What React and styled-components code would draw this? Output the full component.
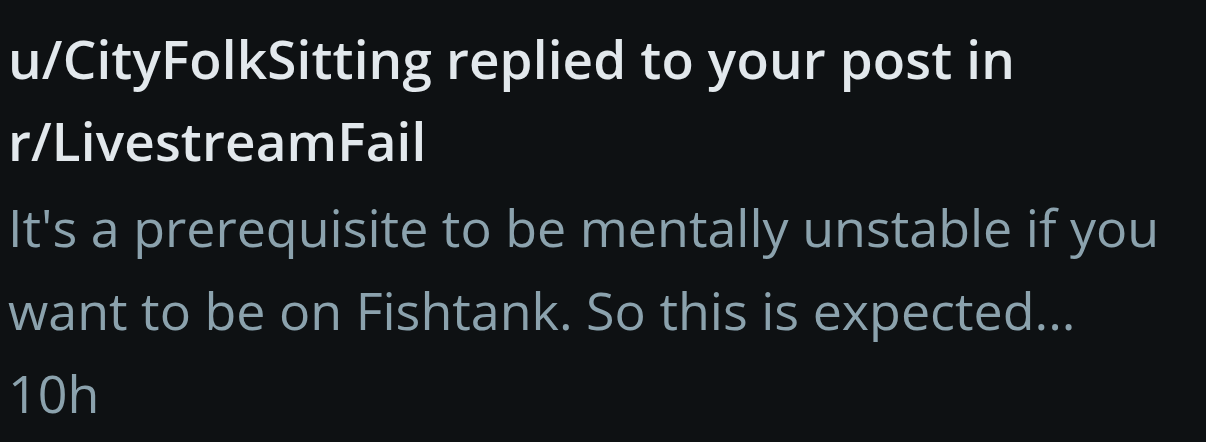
import React from 'react'
import styled, { createGlobalStyle } from 'styled-components'

const Global = createGlobalStyle`
  html, body { margin: 0; padding: 0; background: #0e1113; }
  body { font-family: "Open Sans", "Noto Sans", sans-serif; }
`

const Card = styled.div`
  width: 1206px;
  height: 442px;
  box-sizing: border-box;
  padding: 18px 8px 0;
  background: #0e1113;
  overflow: hidden;
`

const Title = styled.div`
  font-size: 53px;
  font-weight: 600;
  line-height: 82px;
  color: #e2e8ec;
  letter-spacing: 0.15px;
`

const Body = styled.div`
  font-size: 52px;
  font-weight: 400;
  line-height: 83px;
  color: #8ba2ad;
  margin-top: ${p => p.first ? '3px' : '0'};
`

const App = () => {
  return (
    <>
      <Global />
      <Card>
        <Title>u/CityFolkSitting replied to your post in r/LivestreamFail</Title>
        <Body first>It's a prerequisite to be mentally unstable if you want to be on Fishtank. So this is expected...</Body>
        <Body>10h</Body>
      </Card>
    </>
  )
}

export default App
